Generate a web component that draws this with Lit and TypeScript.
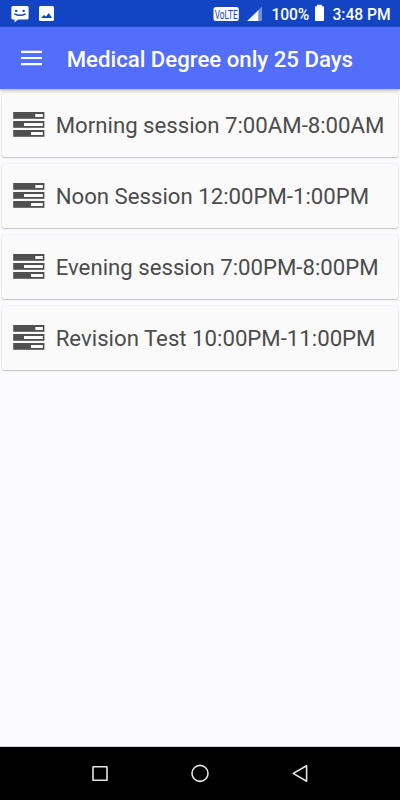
import { LitElement, html, css, svg } from "lit";
import { customElement, property } from "lit/decorators.js";

@customElement("status-bar")
class StatusBar extends LitElement {
  static styles = css`
    :host {
      display: flex;
      height: 27px;
      box-sizing: border-box;
      background: #1244c4;
      color: #fff;
      font: 500 15.6px/27px Roboto, sans-serif;
      border-bottom: 1px solid #2f55d6;
    }
    svg { display: block; flex: none; }
    .left { width: 212px; }
    .pct { width: 38.5px; margin-left: 8.5px; white-space: nowrap; padding-top: 1.5px; letter-spacing: -0.1px; }
    .time { margin-left: 7.5px; white-space: nowrap; padding-top: 1.5px; }
    .volte { font: 400 12.5px Roboto, sans-serif; fill: #1244c4; }
  `;
  render() {
    return html`
      <svg class="left" height="26" viewBox="0 0 212 26">
        <path fill="#fff" d="M13 6H27a1.6 1.6 0 0 1 1.6 1.6V18a1.6 1.6 0 0 1-1.6 1.6H18L14.6 22.4V19.6H13A1.6 1.6 0 0 1 11.4 18V7.6A1.6 1.6 0 0 1 13 6Z" />
        <circle cx="16.2" cy="10.9" r="1.2" fill="#1244c4" />
        <circle cx="23.6" cy="10.9" r="1.2" fill="#1244c4" />
        <path d="M14.3 13.8Q20 16.8 25.7 13.8" fill="none" stroke="#1244c4" stroke-width="1.4" />
        <rect x="39" y="6" width="15" height="15" rx="1.6" fill="#fff" />
        <path d="M41 18L43.9 15L46 16.4L48.8 13L52 18Z" fill="#1244c4" />
      </svg>
      <svg width="51" height="26" viewBox="212 0 51 26">
        <rect x="213.5" y="7" width="25.3" height="14" rx="2.5" fill="#fff" />
        <text class="volte" x="214.7" y="18.6" textLength="23" lengthAdjust="spacingAndGlyphs">VoLTE</text>
        <path d="M262 6.5V21H247.3Z" fill="#7290e0" />
        <path d="M258.3 10.2V21H247.3Z" fill="#fff" />
      </svg>
      <span class="pct">100%</span>
      <svg width="15" height="26" viewBox="310 0 15 26">
        <path d="M317 4.8h4.8V6.3h1.2a1 1 0 0 1 1 1V20a1 1 0 0 1-1 1h-7a1 1 0 0 1-1-1V7.3a1 1 0 0 1 1-1h1Z" fill="#fff" />
      </svg>
      <span class="time">3:48 PM</span>
    `;
  }
}

@customElement("session-card")
class SessionCard extends LitElement {
  @property() label = "";
  static styles = css`
    :host {
      display: flex;
      align-items: center;
      height: 64px;
      background: #fafafa;
      border-radius: 2.5px;
      box-shadow: 0 1px 1.5px rgba(0, 0, 0, 0.22), 0 0 1.5px rgba(0, 0, 0, 0.1);
      color: #4c4c4c;
      font: 400 22.2px/26px Roboto, sans-serif;
    }
    svg { flex: none; margin-left: 11px; }
    .label { margin: 1px 0 0 10.7px; white-space: nowrap; }
  `;
  render() {
    const rows = [
      { y: 0, x: 22.3 },
      { y: 9, x: 11 },
      { y: 18, x: 18 },
    ];
    return html`
      <svg width="32" height="25" viewBox="0 0 32 25">
        ${rows.map(
          (r) => svg`<rect x="0.2" y=${r.y} width="31.2" height="6.8" fill="#505050" />
            <rect x=${r.x} y=${r.y + 2} width=${29.8 - r.x} height="3" fill="#fafafa" />`
        )}
      </svg>
      <span class="label">${this.label}</span>
    `;
  }
}

@customElement("app-root")
class AppRoot extends LitElement {
  static styles = css`
    :host {
      display: flex;
      flex-direction: column;
      height: 800px;
      background: #fafaff;
      overflow: hidden;
    }
    header {
      display: flex;
      align-items: center;
      height: 62px;
      flex: none;
      background: #526efb;
      color: #fff;
      box-shadow: 0 1px 4px rgba(0, 0, 0, 0.35);
      z-index: 1;
    }
    .menu { margin-left: 20px; margin-bottom: 1px; flex: none; }
    h1 {
      margin: 1px 0 0 24.7px;
      font: 500 22.2px/26px Roboto, sans-serif;
      white-space: nowrap;
    }
    main {
      flex: 1;
      display: flex;
      flex-direction: column;
      gap: 7.1px;
      padding: 3.5px 2px 0;
    }
    nav {
      height: 53px;
      flex: none;
      background: #000;
      box-shadow: 0 -1px 0 #d2d2d8;
    }
    nav svg { display: block; }
  `;
  render() {
    const sessions = [
      "Morning session 7:00AM-8:00AM",
      "Noon Session 12:00PM-1:00PM",
      "Evening session 7:00PM-8:00PM",
      "Revision Test 10:00PM-11:00PM",
    ];
    return html`
      <status-bar></status-bar>
      <header>
        <svg class="menu" width="22" height="16" viewBox="0 0 22 16">
          <path d="M1 1.8H22M1 8H22M1 14.2H22" stroke="#fff" stroke-width="2.2" />
        </svg>
        <h1>Medical Degree only 25 Days</h1>
      </header>
      <main>${sessions.map((s) => html`<session-card .label=${s}></session-card>`)}</main>
      <nav>
        <svg width="400" height="53" viewBox="0 747 400 53" fill="none" stroke="#e6e6e6" stroke-width="1.6">
          <rect x="93" y="766.7" width="14" height="13.6" rx="0.4" />
          <circle cx="200" cy="773.4" r="8" />
          <path d="M306.6 765.8V781.2L293.2 773.4Z" stroke-linejoin="round" />
        </svg>
      </nav>
    `;
  }
}
